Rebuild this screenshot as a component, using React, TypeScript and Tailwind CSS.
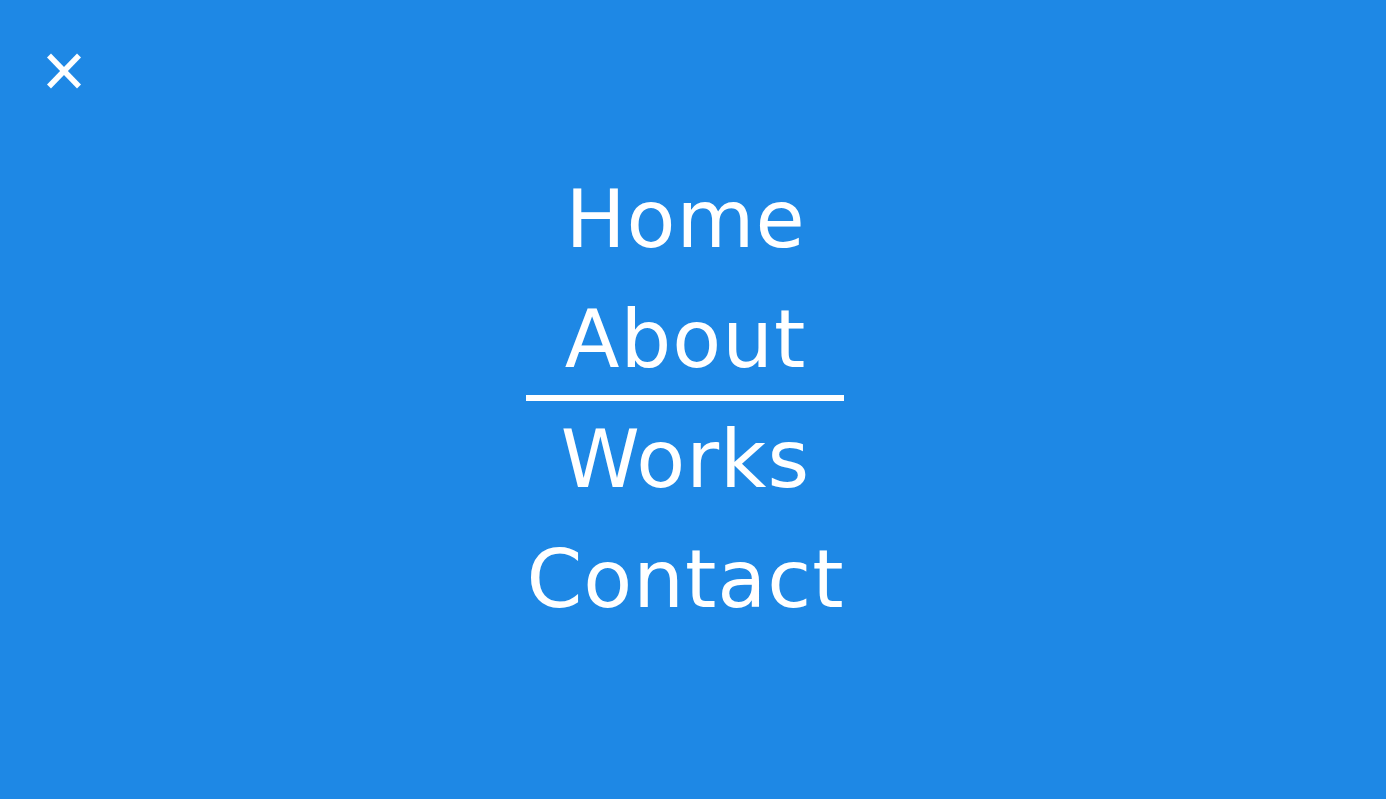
import React from "react";

export default function App() {
  const items = ["Home", "About", "Works", "Contact"];
  return (
    <div className="w-full h-[799px] bg-[#1e88e5] relative overflow-hidden" style={{ fontFamily: '"DejaVu Sans", sans-serif' }}>
      <button className="absolute left-[44px] top-[51px] w-[40px] h-[40px] flex items-center justify-center" aria-label="Close">
        <svg width="40" height="40" viewBox="0 0 40 40">
          <line x1="5" y1="4.5" x2="35" y2="35.5" stroke="#fff" strokeWidth="5.5" />
          <line x1="35" y1="4.5" x2="5" y2="35.5" stroke="#fff" strokeWidth="5.5" />
        </svg>
      </button>
      <div className="h-full flex items-center justify-center pr-[16px]">
        <ul className="inline-flex flex-col">
          {items.map((t) => (
            <li key={t} className="relative h-[120px] leading-[120px] text-center text-white text-[80px] font-normal tracking-[1px]">
              <a href="#" className="mr-[-1px]">{t}</a>
              {t === "About" && <span className="absolute left-0 right-0 bottom-[-1px] h-[6px] bg-white" />}
            </li>
          ))}
        </ul>
      </div>
    </div>
  );
}
